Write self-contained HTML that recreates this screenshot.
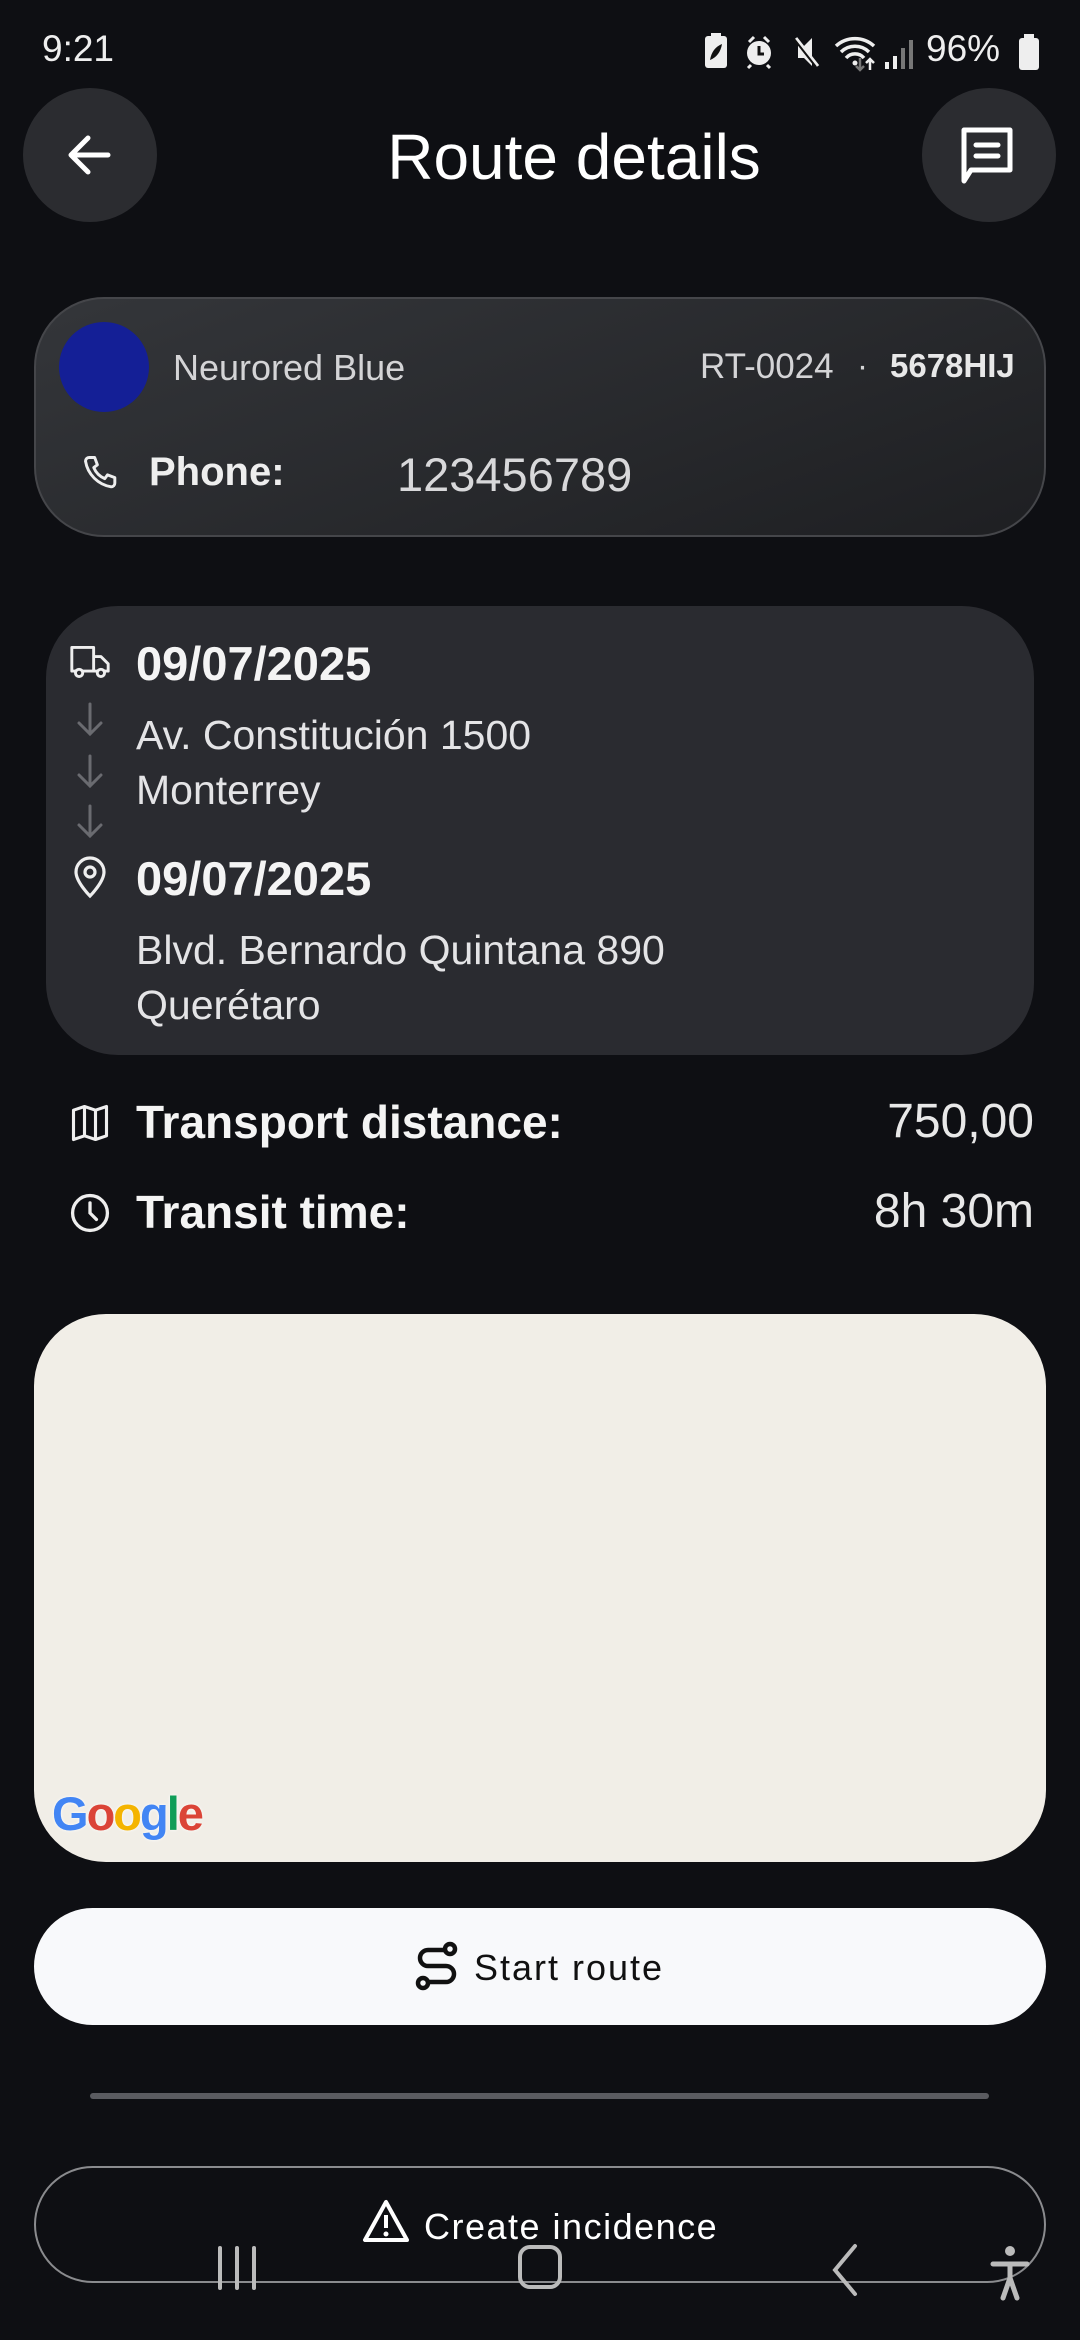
<!DOCTYPE html>
<html><head><meta charset="utf-8"><style>
*{margin:0;padding:0;box-sizing:border-box}
body{width:1080px;height:2340px;background:#0e0f13;color:#fff;font-family:"Liberation Sans",sans-serif;position:relative;overflow:hidden}
.a{position:absolute}
.t{white-space:nowrap}
</style></head><body>
<!-- status bar -->
<div class="a t" style="left:42px;top:28px;font-size:37px;color:#eee">9:21</div>
<svg class="a" style="left:700px;top:32px" width="340" height="40" viewBox="0 0 340 40">
<rect x="5" y="4" width="22" height="32" rx="3" fill="#eee"/><rect x="11" y="1" width="10" height="4" fill="#eee"/>
<path d="M10 28 Q12 16 22 12 Q20 24 10 28" fill="#111"/>
<circle cx="59" cy="21" r="12" fill="#eee"/><path d="M59 14v8h5" stroke="#111" stroke-width="3" fill="none"/>
<path d="M49 10l5-5M69 10l-5-5M51 33l-3 3M67 33l3 3" stroke="#eee" stroke-width="3"/>
<path d="M98 14h6l8-8v28l-8-8h-6z" fill="#eee"/><path d="M96 6l22 28" stroke="#eee" stroke-width="3"/><path d="M94 7l22 28" stroke="#111" stroke-width="2"/>
<path d="M136 14a28 28 0 0 1 38 0M141 20a20 20 0 0 1 28 0M146 26a12 12 0 0 1 18 0" stroke="#eee" stroke-width="3.5" fill="none"/><circle cx="155" cy="31" r="2.5" fill="#eee"/>
<path d="M160 26v12M156 34l4 4 4-4" stroke="#777" stroke-width="2.5" fill="none"/><path d="M170 38v-10M166 31l4-4 4 4" stroke="#eee" stroke-width="2.5" fill="none"/>
<rect x="185" y="30" width="4" height="7" fill="#eee"/><rect x="193" y="24" width="4" height="13" fill="#eee"/><rect x="201" y="16" width="4" height="21" fill="#777"/><rect x="209" y="8" width="4" height="29" fill="#777"/>
</svg>
<div class="a t" style="left:926px;top:28px;font-size:37px;color:#eee">96%</div>
<svg class="a" style="left:1018px;top:34px" width="22" height="36"><rect x="1" y="4" width="20" height="32" rx="3" fill="#eee"/><rect x="6" y="0" width="10" height="5" fill="#eee"/></svg>

<!-- header -->
<div class="a" style="left:23px;top:88px;width:134px;height:134px;border-radius:50%;background:#2b2c30"></div>
<svg class="a" style="left:60px;top:125px" width="60" height="60" viewBox="0 0 60 60"><path d="M48 30H12M28 13L11 30l17 17" stroke="#fff" stroke-width="5" fill="none" stroke-linecap="round" stroke-linejoin="round"/></svg>
<div class="a t" style="left:274px;width:600px;text-align:center;top:120px;font-size:64px;color:#fff">Route details</div>
<div class="a" style="left:922px;top:88px;width:134px;height:134px;border-radius:50%;background:#2b2c30"></div>
<svg class="a" style="left:959px;top:125px" width="60" height="60" viewBox="0 0 60 60"><path d="M5 5h46v40H12l-7 11z" stroke="#fff" stroke-width="5" fill="none" stroke-linejoin="round"/><path d="M17 20h22M17 31h22" stroke="#fff" stroke-width="5" stroke-linecap="round"/></svg>

<!-- card 1 -->
<div class="a" style="left:34px;top:297px;width:1012px;height:240px;border-radius:70px;background:linear-gradient(160deg,#34363a,#1e1f22);border:2px solid #45464a"></div>
<div class="a" style="left:59px;top:322px;width:90px;height:90px;border-radius:50%;background:#141f96"></div>
<div class="a t" style="left:173px;top:347px;font-size:36px;color:#d4d4d6">Neurored Blue</div>
<div class="a t" style="left:700px;top:347px;font-size:35px;color:#d4d4d6">RT-0024</div>
<div class="a t" style="left:857px;top:347px;font-size:33px;color:#d4d4d6">·</div>
<div class="a t" style="left:890px;top:347px;font-size:33px;color:#e8e8e8;font-weight:bold">5678HIJ</div>
<svg class="a" style="left:80px;top:452px" width="44" height="44" viewBox="0 0 24 24"><path d="M5 3h3l1.5 4-2 1.5a11 11 0 0 0 6 6l1.5-2 4 1.5v3a2 2 0 0 1-2 2A17 17 0 0 1 3 5a2 2 0 0 1 2-2" stroke="#eee" stroke-width="1.6" fill="none" stroke-linejoin="round"/></svg>
<div class="a t" style="left:149px;top:450px;font-size:40px;color:#eee;font-weight:bold">Phone:</div>
<div class="a t" style="left:397px;top:447px;font-size:47px;color:#d8d8da">123456789</div>

<!-- card 2 -->
<div class="a" style="left:46px;top:606px;width:988px;height:449px;border-radius:72px;background:#2a2b30"></div>
<svg class="a" style="left:68px;top:642px" width="44" height="40" viewBox="0 0 24 22"><path d="M2 3h12v13H2zM14 8h4l4 4v4h-8" stroke="#eee" stroke-width="1.6" fill="none" stroke-linejoin="round"/><circle cx="6" cy="17" r="2" fill="#2a2b30" stroke="#eee" stroke-width="1.6"/><circle cx="18" cy="17" r="2" fill="#2a2b30" stroke="#eee" stroke-width="1.6"/></svg>
<div class="a t" style="left:136px;top:636px;font-size:47px;font-weight:bold;color:#f4f4f4">09/07/2025</div>
<svg class="a" style="left:70px;top:700px" width="40" height="140" viewBox="0 0 40 140"><g stroke="#6a6b70" stroke-width="3" fill="none" stroke-linecap="round"><path d="M20 4v30M9 23l11 11 11-11"/><path d="M20 56v30M9 75l11 11 11-11"/><path d="M20 106v30M9 125l11 11 11-11"/></g></svg>
<div class="a t" style="left:136px;top:712px;font-size:41px;color:#e4e4e6">Av. Constitución 1500</div>
<div class="a t" style="left:136px;top:767px;font-size:41px;color:#e4e4e6">Monterrey</div>
<svg class="a" style="left:70px;top:852px" width="40" height="48" viewBox="0 0 20 24"><path d="M10 22s-7-7-7-12a7 7 0 0 1 14 0c0 5-7 12-7 12z" stroke="#eee" stroke-width="1.6" fill="none"/><circle cx="10" cy="10" r="2.5" stroke="#eee" stroke-width="1.6" fill="none"/></svg>
<div class="a t" style="left:136px;top:851px;font-size:47px;font-weight:bold;color:#f4f4f4">09/07/2025</div>
<div class="a t" style="left:136px;top:927px;font-size:41px;color:#e4e4e6">Blvd. Bernardo Quintana 890</div>
<div class="a t" style="left:136px;top:982px;font-size:41px;color:#e4e4e6">Querétaro</div>

<!-- stats -->
<svg class="a" style="left:68px;top:1101px" width="44" height="44" viewBox="0 0 24 24"><path d="M3 5l6-2 6 2 6-2v16l-6 2-6-2-6 2zM9 3v16M15 5v16" stroke="#eee" stroke-width="1.7" fill="none" stroke-linejoin="round"/></svg>
<div class="a t" style="left:136px;top:1095px;font-size:46px;font-weight:bold;color:#f4f4f4">Transport distance:</div>
<div class="a t" style="right:46px;top:1094px;font-size:48px;color:#e8e8e8">750,00</div>
<svg class="a" style="left:68px;top:1191px" width="44" height="44" viewBox="0 0 24 24"><circle cx="12" cy="12" r="9.5" stroke="#eee" stroke-width="1.8" fill="none"/><path d="M12 6.5V12l3.5 3.5" stroke="#eee" stroke-width="1.8" fill="none" stroke-linecap="round"/></svg>
<div class="a t" style="left:136px;top:1185px;font-size:46px;font-weight:bold;color:#f4f4f4">Transit time:</div>
<div class="a t" style="right:46px;top:1184px;font-size:48px;color:#e8e8e8">8h 30m</div>

<!-- map -->
<div class="a" style="left:34px;top:1314px;width:1012px;height:548px;border-radius:72px;background:#f1eee7"></div>
<div class="a t" style="left:52px;top:1786px;font-size:47px;font-weight:bold;letter-spacing:-2px;text-shadow:0 0 3px #fff"><span style="color:#4285f4">G</span><span style="color:#db4437">o</span><span style="color:#f4b400">o</span><span style="color:#4285f4">g</span><span style="color:#0f9d58">l</span><span style="color:#db4437">e</span></div>

<!-- start route -->
<div class="a" style="left:34px;top:1908px;width:1012px;height:117px;border-radius:59px;background:#f8f9fb"></div>
<svg class="a" style="left:414px;top:1940px" width="46" height="52" viewBox="0 0 46 52"><g stroke="#111" stroke-width="4.5" fill="none"><circle cx="36" cy="9" r="5"/><circle cx="9" cy="43" r="5"/><path d="M31 10H14a8 8 0 0 0 0 16h18a8 8 0 0 1 0 16H14"/></g></svg>
<div class="a t" style="left:474px;top:1947px;font-size:36px;color:#111;letter-spacing:2px">Start route</div>

<div class="a" style="left:90px;top:2093px;width:899px;height:6px;border-radius:3px;background:#5a5b60"></div>

<!-- create incidence -->
<div class="a" style="left:34px;top:2166px;width:1012px;height:117px;border-radius:59px;border:2.5px solid #8a8b8e"></div>
<svg class="a" style="left:362px;top:2198px" width="48" height="46" viewBox="0 0 48 46"><path d="M24 4L3 42h42z" stroke="#fff" stroke-width="4" fill="none" stroke-linejoin="round"/><path d="M24 17v13" stroke="#fff" stroke-width="4"/><circle cx="24" cy="36" r="2.5" fill="#fff"/></svg>
<div class="a t" style="left:424px;top:2206px;font-size:36px;color:#fff;letter-spacing:1.5px">Create incidence</div>

<!-- nav bar -->
<svg class="a" style="left:0;top:2240px" width="1080" height="70"><g stroke="#bbb" stroke-width="4" fill="none" stroke-linecap="round">
<path d="M220 8v40M237 8v40M254 8v40"/><rect x="520" y="7" width="40" height="40" rx="10"/><path d="M855 6l-20 24 20 24"/></g>
<circle cx="1010" cy="11" r="5" fill="#bbb"/><path d="M993 24h34M1010 24v14l-7 20M1010 38l7 20" stroke="#bbb" stroke-width="5" fill="none" stroke-linecap="round"/></svg>
</body></html>
